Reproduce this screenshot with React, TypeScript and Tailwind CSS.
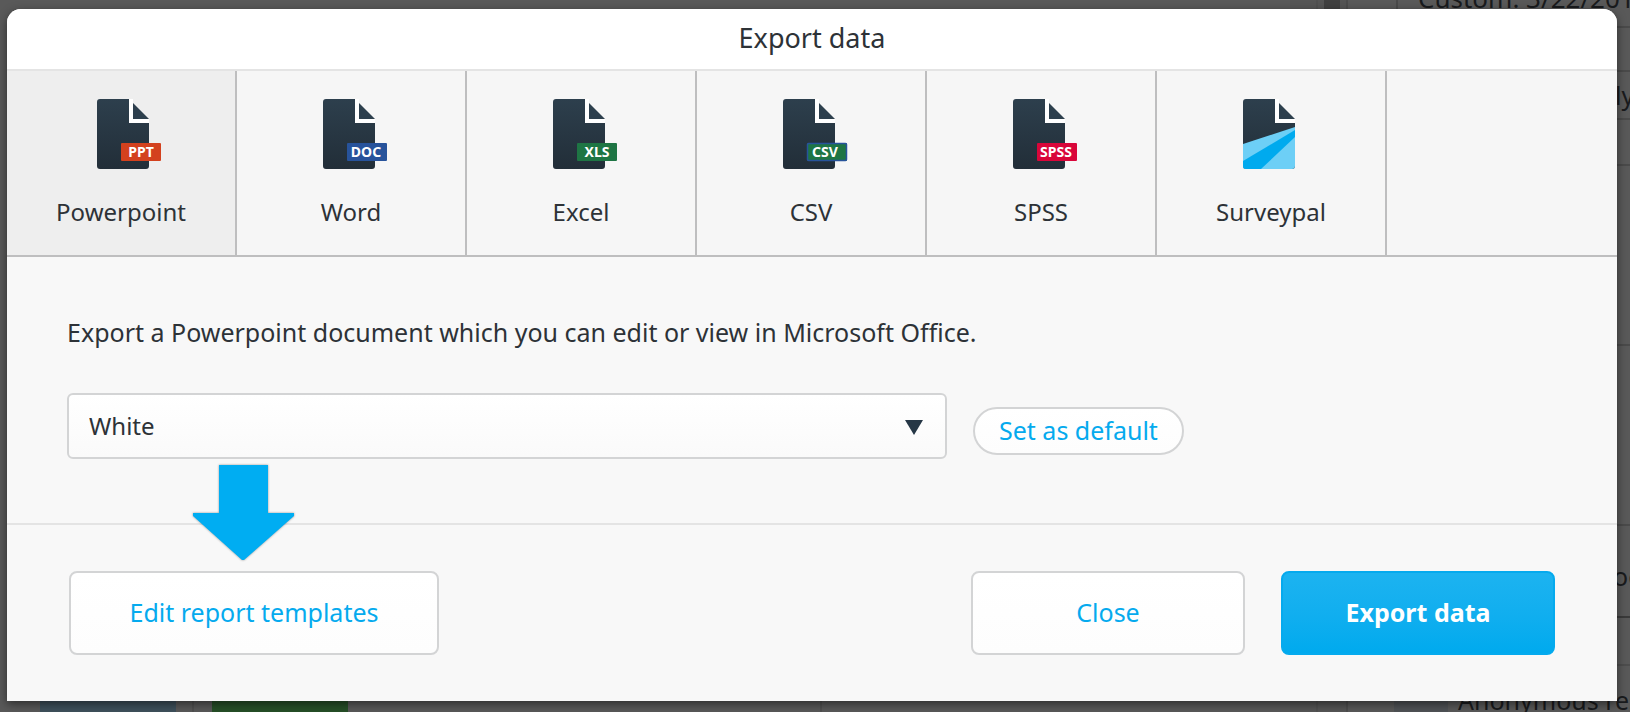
import React, { useState } from 'react';

interface ExportFormat {
  id: string;
  label: string;
  badge?: string;
  badgeFill?: string;
  badgeStroke?: string;
  badgeX?: number;
  pageX: number;
}

const FORMATS: ExportFormat[] = [
  { id: 'ppt', label: 'Powerpoint', badge: 'PPT', badgeFill: '#d3411e', badgeX: 44, pageX: 16 },
  { id: 'doc', label: 'Word', badge: 'DOC', badgeFill: '#27539b', badgeX: 43, pageX: 12 },
  { id: 'xls', label: 'Excel', badge: 'XLS', badgeFill: '#1e7544', badgeX: 44, pageX: 12 },
  { id: 'csv', label: 'CSV', badge: 'CSV', badgeFill: '#1e7544', badgeStroke: '#27539b', badgeX: 42, pageX: 12 },
  { id: 'spss', label: 'SPSS', badge: 'SPSS', badgeFill: '#d9063a', badgeX: 43, pageX: 12 },
  { id: 'surveypal', label: 'Surveypal', pageX: 12 },
];

const FormatIcon = ({ format }: { format: ExportFormat }) => (
  <svg className="w-20 h-[70px]" viewBox="0 0 80 70" aria-hidden="true">
    <defs>
      <linearGradient id={`page-${format.id}`} x1="0" y1="0" x2="0" y2="1">
        <stop offset="0" stopColor="#2d3f4d" />
        <stop offset="1" stopColor="#222e38" />
      </linearGradient>
      <clipPath id={`clip-${format.id}`}>
        <path d="M3 0H32V24H52V67a3 3 0 0 1-3 3H3a3 3 0 0 1-3-3V3a3 3 0 0 1 3-3z" />
      </clipPath>
    </defs>
    <g transform={`translate(${format.pageX} 0)`}>
      <g clipPath={`url(#clip-${format.id})`}>
        <rect width="52" height="70" fill={`url(#page-${format.id})`} />
        {!format.badge && (
          <>
            <path d="M0 45L52 28V70H0z" fill="#6dcff6" />
            <path d="M0 62L52 31V38L18 70H0z" fill="#00aaee" />
          </>
        )}
      </g>
      <path d="M32 0H36V20H52V24H32z" fill="#ffffff" />
      <path d="M36 4L52 20H36z" fill="#2d3f4d" />
      {format.badge && (
        <>
          <rect x="24" y="44" width="40" height="18" rx="1" fill={format.badgeFill} />
          {format.badgeStroke && (
            <rect x="24.5" y="44.5" width="39" height="17" rx="1" fill="none" stroke={format.badgeStroke} strokeWidth="1.5" />
          )}
          <text
            x={format.badgeX}
            y="58"
            textAnchor="middle"
            fill="#ffffff"
            className="font-['Noto_Sans',sans-serif] text-[14px] font-bold"
          >
            {format.badge}
          </text>
        </>
      )}
    </g>
  </svg>
);

// Dimmed report page that stays visible around the dialog
const ReportBackdrop = () => (
  <div className="absolute inset-0 flex overflow-hidden bg-[#595959] text-[25px] text-[#191b1d]" aria-hidden="true">
    <div className="flex flex-1 items-end">
      <div className="flex h-8 flex-1 items-stretch pl-10">
        <div className="w-[136px] bg-[#3e505b]" />
        <div className="ml-4 w-0.5 bg-[#505050]" />
        <div className="ml-[18px] w-[136px] bg-[#264f27]" />
        <div className="ml-[472px] w-0.5 bg-[#505050]" />
      </div>
    </div>
    <div className="flex w-14 bg-[#555555]">
      <div className="w-7 border-r-2 border-[#505050]" />
      <div className="ml-1.5 h-5 w-4 bg-[#404040]" />
    </div>
    <div className="flex w-[284px] flex-col border-l-2 border-[#4d4d4d] *:shrink-0">
      <div className="ml-12 h-7 border-b-2 border-l-2 border-[#4a4a4a] pl-5">
        <div className="-mt-[18px] whitespace-nowrap text-[26px] leading-8">Custom: 3/22/201</div>
      </div>
      <div className="h-11 border-b-2 border-[#4a4a4a]" />
      <div className="h-12 border-b-2 border-[#4a4a4a] pl-[267px] leading-[46px]">ly</div>
      <div className="h-[46px] border-b-2 border-[#4a4a4a]" />
      <div className="h-[180px] border-b-2 border-[#4a4a4a]" />
      <div className="h-[180px] border-b-2 border-[#4a4a4a]" />
      <div className="flex h-[92px] items-center border-b-2 border-[#3a3a3a] pt-3 pl-[265px]">oc</div>
      <div className="h-12 border-b-2 border-[#4d4d4d]" />
      <div className="flex pl-[46px]">
        <div className="h-[46px] w-[54px] shrink-0 bg-[#4f5255]" />
        <div className="pt-5 pl-2.5 whitespace-nowrap leading-7">Anonymous res</div>
      </div>
    </div>
  </div>
);

const SECONDARY_BUTTON =
  'h-[84px] rounded-lg border-2 border-[#d3d4d5] bg-linear-to-b from-white to-[#fdfdfd] text-[25px] text-[#05aaee]';

export default function App() {
  const [active, setActive] = useState('ppt');
  const [template, setTemplate] = useState('White');

  return (
    <div className="relative min-h-screen pt-[9px] pr-[13px] pb-[11px] pl-[7px] font-['Noto_Sans',sans-serif] text-[#2d3237]">
      <ReportBackdrop />

      <div
        role="dialog"
        aria-labelledby="export-title"
        className="relative rounded-t-[14px] bg-[#f8f8f8] shadow-[0_3px_10px_rgba(0,0,0,0.5)]"
      >
        <h2
          id="export-title"
          className="flex h-[62px] items-center justify-center rounded-t-[14px] border-b-2 border-[#e4e4e4] bg-white pb-0.5 text-[27px]"
        >
          Export data
        </h2>

        <div role="tablist" className="grid grid-cols-7 border-b-2 border-[#bebebf] bg-[#f6f6f6]">
          {FORMATS.map((format) => (
            <button
              key={format.id}
              type="button"
              role="tab"
              aria-selected={active === format.id}
              onClick={() => setActive(format.id)}
              className={`flex flex-col items-center gap-[27px] border-r-2 border-[#bebebf] pt-7 pb-[27px] text-2xl ${active === format.id ? 'bg-[#eeeeee]' : ''}`}
            >
              <FormatIcon format={format} />
              {format.label}
            </button>
          ))}
        </div>

        <div className="px-[60px] pt-[60px] pb-16">
          <p className="text-[25px] leading-[30px]">
            Export a Powerpoint document which you can edit or view in Microsoft Office.
          </p>
          <div className="mt-[46px] flex items-end gap-[26px]">
            <div className="relative max-w-[880px] flex-1">
              <select
                aria-label="Report template"
                value={template}
                onChange={(e) => setTemplate(e.target.value)}
                className="block h-[66px] w-full appearance-none rounded-md border-2 border-[#d3d4d5] bg-linear-to-b from-white to-[#fafafa] px-5 text-2xl"
              >
                <option>White</option>
              </select>
              <svg
                className="pointer-events-none absolute top-[27px] right-6 h-[15px] w-[18px]"
                viewBox="0 0 18 15"
                aria-hidden="true"
              >
                <path d="M0 0H18L9 15z" fill="#263746" />
              </svg>
            </div>
            <button
              type="button"
              className="mb-1 flex h-12 items-center rounded-full border-2 border-[#d3d4d5] bg-linear-to-b from-white to-[#fdfdfd] px-6 text-[25px] text-[#05aaee]"
            >
              Set as default
            </button>
          </div>
        </div>

        <div className="relative flex items-center border-t-2 border-[#e4e4e4] px-[62px] py-[46px]">
          {/* Callout arrow pointing at the templates button */}
          <svg
            className="pointer-events-none absolute -top-[60px] left-[186px] h-[96px] w-[101px] drop-shadow-[0_0_1px_rgba(0,0,0,0.4)]"
            viewBox="0 0 101 96"
            aria-hidden="true"
          >
            <path d="M26 0H75V48H101V51L51 95H49L0 51V48H26z" fill="#00adf2" />
          </svg>
          <button type="button" className={`${SECONDARY_BUTTON} w-[370px]`}>
            Edit report templates
          </button>
          <button type="button" className={`${SECONDARY_BUTTON} ml-auto w-[274px]`}>
            Close
          </button>
          <button
            type="button"
            className="ml-9 h-[84px] w-[274px] rounded-lg border-2 border-[#05aaee] bg-linear-to-b from-[#1cb3f0] to-[#00aaee] text-[25px] font-bold text-white"
          >
            Export data
          </button>
        </div>
      </div>
    </div>
  );
}
